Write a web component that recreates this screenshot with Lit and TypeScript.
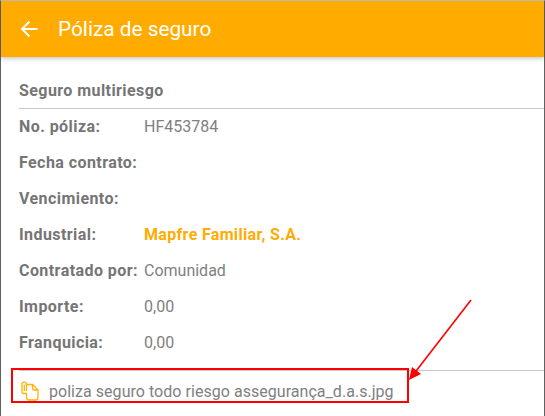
import {LitElement, html, css, svg} from 'lit';
import {customElement} from 'lit/decorators.js';

const rows: {label: string; value: string; accent?: boolean}[] = [
  {label: 'No. póliza:', value: 'HF453784'},
  {label: 'Fecha contrato:', value: ''},
  {label: 'Vencimiento:', value: ''},
  {label: 'Industrial:', value: 'Mapfre Familiar, S.A.', accent: true},
  {label: 'Contratado por:', value: 'Comunidad'},
  {label: 'Importe:', value: '0,00'},
  {label: 'Franquicia:', value: '0,00'},
];

@customElement('app-root')
export class AppRoot extends LitElement {
  static styles = css`
    :host {
      display: block;
      position: relative;
      width: 545px;
      height: 416px;
      overflow: hidden;
      background: #fff;
      font-family: Roboto, 'Liberation Sans', sans-serif;
      color: #757575;
    }

    .frame {
      box-sizing: border-box;
      height: 416px;
      border-top: 1px solid #bdbdbd;
      border-left: 1px solid #616161;
      border-right: 1px solid #616161;
    }

    .bar {
      height: 56px;
      background: #ffab00;
      display: flex;
      align-items: center;
      padding-left: 19px;
      gap: 20px;
      color: #fff;
      font-size: 20.8px;
      box-shadow: 0 2px 4px rgba(0, 0, 0, 0.2);
    }

    .bar svg {
      display: block;
    }

    .content {
      padding: 24px 0 0 18px;
    }

    .title {
      font-size: 16px;
      font-weight: 700;
      letter-spacing: 0.43px;
      line-height: 20px;
      padding-bottom: 7px;
      border-bottom: 1px solid #c8c8c8;
    }

    .rows {
      padding: 0 0 10px;
      margin-top: -1px;
      border-bottom: 1px solid #c8c8c8;
    }

    .row {
      display: flex;
      height: 36px;
      align-items: center;
      font-size: 16px;
      color: #808080;
    }

    .label {
      width: 125px;
      color: #757575;
      font-weight: 700;
      letter-spacing: 0.43px;
      white-space: nowrap;
    }

    .row .accent {
      color: #ffab00;
      font-weight: 700;
      letter-spacing: 0.33px;
    }

    .file {
      display: flex;
      align-items: center;
      gap: 10px;
      height: 40px;
      padding-left: 2px;
      font-size: 16px;
      letter-spacing: 0.04px;
      color: #808080;
    }

    .marks {
      position: absolute;
      inset: 0;
      pointer-events: none;
    }

    .box {
      position: absolute;
      left: 11px;
      top: 368px;
      width: 394px;
      height: 31px;
      border: 2px solid #f00;
    }

    .marks svg {
      position: absolute;
      left: 0;
      top: 0;
    }
  `;

  render() {
    return html`
      <div class="frame">
        <div class="bar">
          ${this.backIcon()}
          <span>Póliza de seguro</span>
        </div>
        <div class="content">
          <div class="title">Seguro multiriesgo</div>
          <div class="rows">
            ${rows.map(
              (r) => html`<div class="row">
                <span class="label">${r.label}</span>
                <span class="${r.accent ? 'accent' : ''}">${r.value}</span>
              </div>`
            )}
          </div>
          <div class="file">
            ${this.fileIcon()}
            <span>poliza seguro todo riesgo assegurança_d.a.s.jpg</span>
          </div>
        </div>
      </div>
      <div class="marks">
        <div class="box"></div>
        <svg width="545" height="416" viewBox="0 0 545 416">
          ${svg`<line x1="471" y1="300" x2="413" y2="375" stroke="#f00" stroke-width="1.6"/>
          <path d="M409 380 L412 367 L421 374 Z" fill="#f00"/>`}
        </svg>
      </div>
    `;
  }

  backIcon() {
    return html`<svg width="18" height="18" viewBox="0 0 18 18" fill="none"
      stroke="#fff" stroke-width="2">
      <path d="M17.500 9H2M9.500 1.500 2 9l7.500 7.500"/>
    </svg>`;
  }

  fileIcon() {
    return html`<svg width="18" height="20" viewBox="0 0 18 20" fill="none"
      stroke="#ffb300" stroke-width="1.300">
      <path d="M6 12.500H3.200C2 12.500 1 11.500 1 10.300V3C1 .4 5.500 .4 5.500 3V10"/>
      <path d="M3.300 3.500V10"/>
      <path d="M5.500 3.500H11.500L17 9V16.500C17 18 16 19 14.500 19H8C6.500 19 5.500 18 5.500 16.500V12.500"/>
      <path d="M11.500 3.500V7.500C11.500 8.500 12 9 13 9H17"/>
    </svg>`;
  }
}
